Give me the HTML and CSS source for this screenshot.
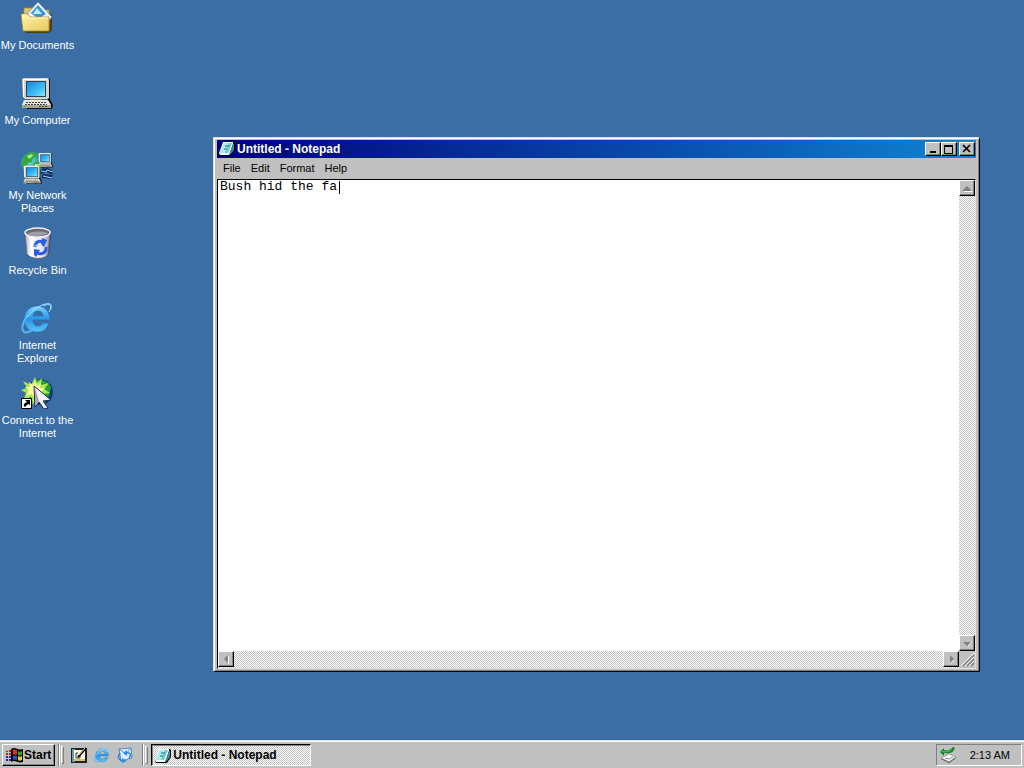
FILE: index.html
```
<!DOCTYPE html>
<html lang="en">
<head>
    <meta charset="UTF-8">
    <title>Desktop</title>
    <link rel="stylesheet" href="styles.css">
</head>
<body>
    <!-- shared icons -->
    <svg class="defs" width="0" height="0" aria-hidden="true">
        <defs>
            <linearGradient id="ie-blue" x1="0" y1="0" x2="0" y2="1">
                <stop offset="0" stop-color="#7cd4ff"/>
                <stop offset="0.5" stop-color="#2a94e6"/>
                <stop offset="1" stop-color="#5cc4fa"/>
            </linearGradient>
            <linearGradient id="screen" x1="0" y1="0" x2="1" y2="1">
                <stop offset="0" stop-color="#1c86e0"/>
                <stop offset="0.6" stop-color="#3cbcf4"/>
                <stop offset="1" stop-color="#8ceaff"/>
            </linearGradient>
            <linearGradient id="folder" x1="0" y1="0" x2="1" y2="1">
                <stop offset="0" stop-color="#fff6a8"/>
                <stop offset="1" stop-color="#e6c860"/>
            </linearGradient>
            <linearGradient id="bin" x1="0" y1="0" x2="1" y2="0">
                <stop offset="0" stop-color="#b0b0bc"/>
                <stop offset="0.25" stop-color="#ffffff"/>
                <stop offset="0.7" stop-color="#e4e4f0"/>
                <stop offset="1" stop-color="#9090a4"/>
            </linearGradient>
            <radialGradient id="globe" cx="0.35" cy="0.35" r="0.7">
                <stop offset="0" stop-color="#7fe8d8"/>
                <stop offset="0.5" stop-color="#2a9fae"/>
                <stop offset="1" stop-color="#0a3c70"/>
            </radialGradient>
            <symbol id="ie" viewBox="0 0 32 32">
                <path fill="url(#ie-blue)" stroke="#1c6fc0" stroke-width="0.600" d="M29 18H12c0 4 2 6 5 6 2 0 4-1 5-3h6c-2 6-6 9-12 9C8 30 3 24 3 17S9 4 16 4s13 5 13 14zM12 14h10c0-3-2-5-5-5s-5 2-5 5z"/>
                <path fill="none" stroke="#58b4f0" stroke-width="2" d="M22 4c5-3 9-3 8 3M6 14C1 21 0 28 3 30c2 1 6 0 9-3"/>
                <path fill="none" stroke="#b0e4ff" stroke-width="1" d="M6 15C12 7 22 1 28 2c3 1 2 4 0 8"/>
            </symbol>
            <symbol id="notepad" viewBox="0 0 16 16">
                <path fill="#000" d="M5 1h10l1 1v7l-4 6H1l-1-2z"/>
                <path fill="#f4ffff" d="M4 1h10v2l-4 11H1l-1-2z"/>
                <path fill="#6cc8cc" d="M5 2h8l-4 10H1z"/>
                <path fill="#a8ecec" d="M5 2h5L6 12H1z"/>
                <path stroke="#1c6c78" d="M6 5h4M5 8h3"/>
                <path fill="#388c98" d="M14 3h1v6l-4 5h-1z"/>
            </symbol>
            <symbol id="pc" viewBox="0 0 32 32">
                <path fill="#111" d="M27 2h2v20l3 6-1 4H6v-2h21z"/>
                <path fill="#d8d4c8" d="M1 2l2-1h24l1 2v18l-2 1H4l-2-2z"/>
                <path fill="#fff" d="M2 2h24v1H3v17H2z"/>
                <path fill="#204068" d="M5 4h20v16H5z"/>
                <path fill="url(#screen)" d="M6 5h18v14H6z"/>
                <path fill="#8c887c" d="M9 22h12v2H9z"/>
                <path fill="#e8e4d8" d="M3 23h24l3 5H1z"/>
                <path fill="#aaa69a" d="M1 28h29v3H1z"/>
                <path stroke="#44423c" stroke-dasharray="2 1" d="M5 25.500h20M4 27.500h22M18 29.500h9"/>
                <path fill="#30c040" d="M3 29h2v1H3z"/>
            </symbol>
        </defs>
    </svg>

    <main class="desktop">
        <nav class="shortcuts" aria-label="Desktop">
            <button class="shortcut">
                <svg viewBox="0 0 32 32">
                    <path fill="#4c3c14" d="M28 12h3v16l-3 3H5l-1-2z"/>
                    <path fill="#e8cc64" stroke="#a88828" stroke-width="0.800" d="M3 6h8l2 2h15v19H3z"/>
                    <path fill="#f4f8ff" stroke="#6088b0" stroke-width="0.800" d="M17 0l14 15-7 8L5 13z"/>
                    <path fill="#3a94d4" d="M17 3l8 9-8 5-8-5z"/>
                    <path fill="#b8ecff" d="M16 6l5 6h-9z"/>
                    <path fill="#fff" stroke="#7090a8" stroke-width="0.600" d="M7 9l10 7H7z"/>
                    <path fill="url(#folder)" stroke="#a88828" stroke-width="0.800" d="M0 12h7l2 3h19v14H2z"/>
                    <path fill="none" stroke="#fffbd0" d="M1 13h5l2 3h19"/>
                </svg>
                <span>My Documents</span>
            </button>
            <button class="shortcut">
                <svg><use href="#pc"/></svg>
                <span>My Computer</span>
            </button>
            <button class="shortcut">
                <svg viewBox="0 0 32 32">
                    <circle cx="12" cy="12" r="12" fill="url(#globe)"/>
                    <path fill="#35a83c" d="M2 6c3-4 8-7 13-5l2 3-5 2-1 4-4 1-2 5-4-2zM12 12l5-3 5 3-2 7-5 2z"/>
                    <path fill="#a4ef90" d="M6 4l5-2 1 2-4 3zM14 12h3v2h-3z"/>
                    <use href="#pc" x="17" y="0" width="15" height="16"/>
                    <use href="#pc" x="2" y="13" width="19" height="19"/>
                    <path fill="none" stroke="#112b60" stroke-width="4" d="M20 20l6-2 6 3M21 24l10 1"/>
                    <path fill="none" stroke="#a8d0ff" stroke-width="1" d="M20 19l5 1 1-2 6 2M22 24l9 2"/>
                </svg>
                <span>My Network Places</span>
            </button>
            <button class="shortcut">
                <svg viewBox="0 0 32 32">
                    <path fill="#404050" d="M29 6l1 1-2 20-5 4-7 1z"/>
                    <path fill="url(#bin)" stroke="#6c6c80" stroke-width="0.800" d="M4 5l2 22c3 4 10 5 15 4 4-1 6-3 6-5l2-20z"/>
                    <path fill="#686874" stroke="#f0f0f8" stroke-width="1.500" d="M4 6c-1-3 7-5 13-5s13 2 12 5-6 4-12 4S5 9 4 6z"/>
                    <path fill="#9c9ca8" d="M6 7c5-3 15-3 21-1-3 3-17 5-21 1z"/>
                    <path fill="none" stroke="#2a5ee0" stroke-width="3" d="M14 20c0-5 4-7 8-5M25 20c1 6-5 8-9 6"/>
                    <path fill="#2a5ee0" d="M21 11l5 2-3 7-3-3zM13 22l6 1-4 7-2-2z"/>
                    <path fill="#70a8ff" d="M13 18l4-1-2 4z"/>
                </svg>
                <span>Recycle Bin</span>
            </button>
            <button class="shortcut">
                <svg><use href="#ie"/></svg>
                <span>Internet Explorer</span>
            </button>
            <button class="shortcut">
                <svg viewBox="0 0 32 32">
                    <circle cx="19" cy="15" r="13" fill="#0c3c78"/>
                    <path fill="#2c9c38" d="M13 3c7-2 14 1 17 7l-2 9-5 2-5-7-6-2zM20 22l7-1-4 6z"/>
                    <path fill="#a8e850" d="M14 0l2 6 5-5-1 7 8-2-5 6 6 4-8 1 2 7-7-4-4 8-2-8-8 4 3-8-5-3 6-2-4-7 8 4z"/>
                    <path fill="#ffffa0" d="M14 4l2 5 4-4-1 6 5 0-4 4-6 7-3-5-6 2 3-6-4-3 5 0-1-5 4 3z"/>
                    <path fill="#f4f4fc" stroke="#202848" stroke-width="1" d="M13 9l17 14-8 1 5 7-4 1-5-7-4 5z"/>
                    <path fill="#a4a4b8" d="M14 11l4 13-4 4z"/>
                    <path fill="#fff" stroke="#000" d="M0.500 21.500h10v10H0.500z"/>
                    <path fill="#000" d="M4 23h5v5l-2-1-3 3-1-1c-1-2 1-3 3-4z"/>
                </svg>
                <span>Connect to the Internet</span>
            </button>
        </nav>

        <section class="window">
            <header class="title-bar">
                <svg class="small-icon"><use href="#notepad"/></svg>
                <h1>Untitled - Notepad</h1>
                <button class="caption" aria-label="Minimize"><svg viewBox="0 0 12 10"><path d="M3 7h6v2H3z"/></svg></button>
                <button class="caption" aria-label="Maximize"><svg viewBox="0 0 12 10"><path fill-rule="evenodd" d="M1 1h9v9H1zM2 3v6h7V3z"/></svg></button>
                <button class="caption close" aria-label="Close"><svg viewBox="0 0 12 10"><path fill="none" stroke="#000" stroke-width="1.700" d="M2 1l7 7M9 1L2 8"/></svg></button>
            </header>
            <div class="menu-bar" role="menubar">
                <button role="menuitem">File</button>
                <button role="menuitem">Edit</button>
                <button role="menuitem">Format</button>
                <button role="menuitem">Help</button>
            </div>
            <div class="client">
                <div class="page">
                    <textarea aria-label="Text" spellcheck="false">Bush hid the fa</textarea>
                    <span class="caret"></span>
                </div>
                <div class="scrollbar vertical">
                    <button aria-label="Scroll up"><svg viewBox="0 0 9 9"><path class="shine" d="M1 7h8v1H1z"/><path d="M0 6l4-4 4 4v1H0z"/></svg></button>
                    <button aria-label="Scroll down"><svg viewBox="0 0 9 9"><path class="shine" d="M8 3h1L5 8V7z"/><path d="M0 3h8L4 7z"/></svg></button>
                </div>
                <div class="scrollbar">
                    <button aria-label="Scroll left"><svg viewBox="0 0 9 9"><path class="shine" d="M6 1h1v8H6z"/><path d="M6 0v8L2 4z"/></svg></button>
                    <button aria-label="Scroll right"><svg viewBox="0 0 9 9"><path class="shine" d="M3 8l4-4v1L3 9z"/><path d="M3 0v8l4-4z"/></svg></button>
                </div>
                <svg class="grip" viewBox="0 0 16 16">
                    <path stroke="#fff" d="M2 15L15 2M6 15l9-9M10 15l5-5"/>
                    <path stroke="#808080" stroke-width="1.500" d="M4 15L15 4M8 15l7-7M12 15l3-3"/>
                </svg>
            </div>
        </section>
    </main>

    <footer class="taskbar">
        <button class="start">
            <svg class="flag" viewBox="0 0 17 16">
                <path fill="#000" d="M5 2c4-3 7 2 12 0v13c-5 2-8-3-12 0z"/>
                <path fill="#e03020" d="M7 3c2-1 3 0 4 0v5c-1 0-2-1-4 0z"/>
                <path fill="#30a030" d="M12 4c1 1 2 1 4 0v4c-2 1-3 1-4 0z"/>
                <path fill="#3050d0" d="M7 9c2-1 3 0 4 0v4c-1 0-2-1-4 0z"/>
                <path fill="#f0d020" d="M12 9c1 1 2 1 4 0v4c-2 1-3 1-4 0z"/>
                <path fill="#c02020" d="M0 4h2v1H0zM3 3h2v2H3zM0 6h2v2H0zM3 6h2v2H3z"/>
                <path fill="#2030a0" d="M0 9h2v2H0zM3 9h2v2H3zM0 12h2v2H0zM3 12h2v2H3z"/>
            </svg>
            Start
        </button>
        <span class="separator"></span>
        <span class="handle"></span>
        <div class="quick-launch">
            <button aria-label="Show Desktop">
                <svg class="small-icon" viewBox="0 0 16 16">
                    <path fill="#202020" d="M0 1h16v15H0z"/>
                    <path fill="#58a0b8" d="M1 2h3v13H1z"/>
                    <path fill="#fffbe0" d="M3 3h11v11H3z"/>
                    <path fill="#d8c070" d="M3 12h11v2H3z"/>
                    <path fill="none" stroke="#000" stroke-width="2" d="M15 1L7 10"/>
                    <path stroke="#ffe060" d="M14 1L8 8"/>
                    <path fill="none" stroke="#333" d="M5 6h2M5 6v5h4V9"/>
                </svg>
            </button>
            <button aria-label="Internet Explorer"><svg class="small-icon"><use href="#ie"/></svg></button>
            <button aria-label="Outlook Express">
                <svg class="small-icon" viewBox="0 0 16 16">
                    <path fill="#dceeff" stroke="#4c88c8" d="M2 2l12-1 1 10-11 3z"/>
                    <path fill="none" stroke="#5c94cc" d="M2 2l7 5 5-6"/>
                    <path fill="none" stroke="#2c84dc" stroke-width="1.500" d="M3 6c-3 4-1 8 4 8M12 11c3-3 1-6-3-5"/>
                    <path fill="#2c8cec" d="M5 11l5 3-5 2zM10 3v6L6 6z"/>
                </svg>
            </button>
        </div>
        <span class="separator"></span>
        <span class="handle"></span>
        <button class="task">
            <svg class="small-icon"><use href="#notepad"/></svg>
            Untitled - Notepad
        </button>
        <div class="tray">
            <svg class="small-icon" viewBox="0 0 16 16">
                <path fill="#404040" d="M1 12l8-4 7 3-7 5z"/>
                <path fill="#f4f4f0" stroke="#808080" stroke-width="0.600" d="M1 11l8-4 7 3-7 5z"/>
                <path fill="none" stroke="#909090" d="M5 11l4 1 4-2"/>
                <path fill="#108020" d="M0 5l4-4v2c4 1 6 0 9-3l2 1c-2 5-6 6-11 5v3z"/>
                <path fill="#50d850" d="M2 4c5 1 8 0 11-3-2 4-6 5-11 4z"/>
            </svg>
            <time>2:13 AM</time>
        </div>
    </footer>
</body>
</html>
```
FILE: styles.css
```
* {
    box-sizing: border-box;
}
body {
    margin: 0;
    height: 100vh;
    display: flex;
    flex-direction: column;
    overflow: hidden;
    background: #3a6ea5;
    font: 11px/13px "Liberation Sans", Arial, sans-serif;
    color: #000;
}
button {
    margin: 0;
    padding: 0;
    border: 0;
    background: none;
    font: inherit;
    color: inherit;
}
svg {
    display: block;
    flex: none;
}
.defs {
    position: absolute;
}
.small-icon {
    width: 16px;
    height: 16px;
}

/* desktop */
.desktop {
    position: relative;
    flex: 1;
    min-height: 0;
}
.shortcuts {
    display: grid;
    grid-auto-rows: 75px;
    width: 75px;
}
.shortcut {
    display: flex;
    flex-direction: column;
    align-items: center;
    gap: 5px;
    padding-top: 2px;
    color: #fff;
}
.shortcut svg {
    width: 32px;
    height: 32px;
    margin-right: 2px;
}

/* window */
.window {
    position: absolute;
    top: 137px;
    right: 44px;
    bottom: 68px;
    left: 213px;
    display: flex;
    flex-direction: column;
    padding: 2px;
    background: #c0c0c0;
    border: 1px solid;
    border-color: #dfdfdf #000 #000 #dfdfdf;
    box-shadow: inset 1px 1px #fff, inset -1px -1px #808080;
}
.title-bar {
    display: flex;
    align-items: center;
    height: 18px;
    margin: 0 1px;
    padding: 0 1px 0 2px;
    background: linear-gradient(to right, #00007b, #1084d0);
    color: #fff;
}
.title-bar h1 {
    flex: 1;
    margin: 0 0 0 2px;
    font-size: 12px;
}
.caption,
.scrollbar button {
    display: flex;
    align-items: center;
    justify-content: center;
    width: 16px;
    height: 14px;
    background: #c0c0c0;
    border: 1px solid;
    border-color: #fff #000 #000 #fff;
    box-shadow: inset -1px -1px #808080;
}
.caption svg {
    width: 12px;
    height: 10px;
}
.close {
    margin-left: 2px;
}
.menu-bar {
    display: flex;
    height: 21px;
    padding-left: 2px;
}
.menu-bar button {
    padding: 0 5px;
}
.client {
    flex: 1;
    display: grid;
    grid-template: minmax(0, 1fr) 17px / minmax(0, 1fr) 16px;
    margin: 0 1px;
    border: 1px solid;
    border-color: #000 #dfdfdf #dfdfdf #000;
    background: #c0c0c0;
}
.page {
    position: relative;
    background: #fff;
}
.page textarea {
    display: block;
    width: 100%;
    height: 100%;
    padding: 0 2px;
    border: 0;
    outline: 0;
    resize: none;
    overflow: hidden;
    background: #fff;
    color: #000;
    font: 13px/14px "Liberation Mono", "Courier New", monospace;
}
.caret {
    position: absolute;
    top: 1px;
    left: 121px;
    width: 1px;
    height: 13px;
    background: #000;
}
.scrollbar {
    display: flex;
    justify-content: space-between;
    background: repeating-conic-gradient(#c0c0c0 0 25%, #fff 0 50%) 0 0 / 2px 2px;
}
.vertical {
    flex-direction: column;
}
.scrollbar button {
    width: 16px;
    height: 16px;
}
.scrollbar svg {
    width: 9px;
    height: 9px;
    fill: #808080;
}
.shine {
    fill: #fff;
}
.grip {
    width: 16px;
    height: 16px;
}

/* taskbar */
.taskbar {
    display: flex;
    align-items: center;
    height: 28px;
    padding: 2px 2px 1px;
    background: #c0c0c0;
    border-top: 1px solid #dfdfdf;
    box-shadow: inset 0 1px #fff;
}
.start,
.task {
    display: flex;
    align-items: center;
    height: 22px;
    border: 1px solid;
    font-size: 12px;
    font-weight: bold;
}
.start {
    gap: 1px;
    padding: 0 3px;
    border-color: #fff #000 #000 #fff;
    box-shadow: inset -1px -1px #808080;
}
.flag {
    width: 17px;
    height: 16px;
}
.separator {
    width: 2px;
    height: 22px;
    margin-left: 3px;
    border-left: 1px solid #808080;
    border-right: 1px solid #fff;
}
.handle {
    width: 3px;
    height: 18px;
    margin-left: 1px;
    border: 1px solid;
    border-color: #fff #808080 #808080 #fff;
}
.quick-launch {
    display: flex;
    gap: 7px;
    margin: 0 6px 0 7px;
}
.task {
    gap: 2px;
    width: 160px;
    margin-left: 3px;
    padding: 1px 0 0 3px;
    border-color: #000 #fff #fff #000;
    box-shadow: inset 1px 1px #808080;
    background: repeating-conic-gradient(#c0c0c0 0 25%, #fff 0 50%) 0 0 / 2px 2px;
}
.tray {
    display: flex;
    align-items: center;
    gap: 14px;
    height: 22px;
    margin-left: auto;
    padding: 0 11px 0 3px;
    border: 1px solid;
    border-color: #808080 #fff #fff #808080;
}
```
